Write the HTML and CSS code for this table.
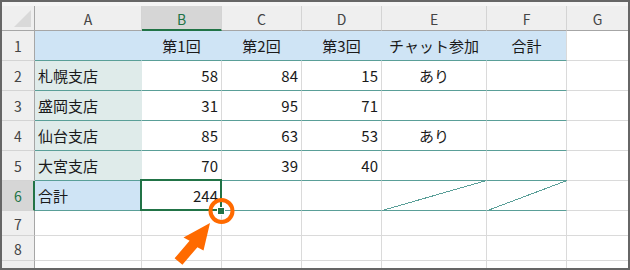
FILE: index.html
```html
<!DOCTYPE html>
<html lang="ja">
<head>
<meta charset="utf-8">
<link rel="stylesheet" href="styles.css">
</head>
<body>
<div class="frame">
  <div class="sheet">
    <div class="cell corner"><svg width="32" height="24" viewBox="0 0 32 24"><polygon points="12,21 29,21 29,4" fill="#d9d9d9"/></svg></div>
    <div class="cell ch">A</div>
    <div class="cell ch sel">B</div>
    <div class="cell ch">C</div>
    <div class="cell ch">D</div>
    <div class="cell ch">E</div>
    <div class="cell ch">F</div>
    <div class="cell ch last">G</div>

    <div class="cell rh">1</div>
    <div class="cell blue tb nr"></div>
    <div class="cell blue tb nr ctr">第1回</div>
    <div class="cell blue tb nr ctr">第2回</div>
    <div class="cell blue tb nr ctr">第3回</div>
    <div class="cell blue tb nr ctr">チャット参加</div>
    <div class="cell blue tb ctr">合計</div>
    <div class="cell last"></div>

    <div class="cell rh">2</div>
    <div class="cell lbl tb">札幌支店</div>
    <div class="cell tb num">58</div>
    <div class="cell tb num">84</div>
    <div class="cell tb num">15</div>
    <div class="cell tb ctr">あり</div>
    <div class="cell tb"></div>
    <div class="cell last"></div>

    <div class="cell rh">3</div>
    <div class="cell lbl tb">盛岡支店</div>
    <div class="cell tb num">31</div>
    <div class="cell tb num">95</div>
    <div class="cell tb num">71</div>
    <div class="cell tb ctr"></div>
    <div class="cell tb"></div>
    <div class="cell last"></div>

    <div class="cell rh">4</div>
    <div class="cell lbl tb">仙台支店</div>
    <div class="cell tb num">85</div>
    <div class="cell tb num">63</div>
    <div class="cell tb num">53</div>
    <div class="cell tb ctr">あり</div>
    <div class="cell tb"></div>
    <div class="cell last"></div>

    <div class="cell rh">5</div>
    <div class="cell lbl tb">大宮支店</div>
    <div class="cell tb num">70</div>
    <div class="cell tb num">39</div>
    <div class="cell tb num">40</div>
    <div class="cell tb ctr"></div>
    <div class="cell tb"></div>
    <div class="cell last"></div>

    <div class="cell rh sel">6</div>
    <div class="cell blue tb nr">合計</div>
    <div class="cell tb num">244</div>
    <div class="cell tb"></div>
    <div class="cell tb"></div>
    <div class="cell tb diag"><svg width="104" height="29" viewBox="0 0 104 29"><line x1="0" y1="29.5" x2="104.5" y2="-0.5" stroke="#5a9f98" stroke-width="1" shape-rendering="crispEdges"/></svg></div>
    <div class="cell tb diag"><svg width="79" height="29" viewBox="0 0 79 29"><line x1="0.5" y1="29.5" x2="80" y2="-0.5" stroke="#5a9f98" stroke-width="1" shape-rendering="crispEdges"/></svg></div>
    <div class="cell last"></div>

    <div class="cell rh">7</div>
    <div class="cell"></div><div class="cell"></div><div class="cell"></div><div class="cell"></div><div class="cell"></div><div class="cell"></div><div class="cell last"></div>

    <div class="cell rh">8</div>
    <div class="cell"></div><div class="cell"></div><div class="cell"></div><div class="cell"></div><div class="cell"></div><div class="cell"></div><div class="cell last"></div>

    <div class="cell rh">9</div>
    <div class="cell"></div><div class="cell"></div><div class="cell"></div><div class="cell"></div><div class="cell"></div><div class="cell"></div><div class="cell last"></div>
  </div>

  <svg class="overlay" width="630" height="270" viewBox="0 0 630 270">
    <rect x="141" y="180" width="80" height="30" fill="none" stroke="#217346" stroke-width="2"/>
    <rect x="217" y="207" width="8" height="8" fill="#ffffff"/>
    <rect x="218" y="208" width="6" height="6" fill="#217346"/>
    <circle cx="221.5" cy="211" r="11" fill="none" stroke="#ff6a00" stroke-width="4"/>
    <polygon points="210,223 203.5,250.5 197.4,247.2 182.4,264.7 174.6,258.3 189.6,240.8 183.5,237.5" fill="#ff6a00"/>
  </svg>
</div>
</body>
</html>
```

FILE: styles.css
```css
html, body {
  margin: 0;
  padding: 0;
  background: #ffffff;
}

.frame {
  position: relative;
  width: 630px;
  height: 270px;
  box-sizing: border-box;
  border: 2px solid #666666;
  background: #f5f5f5;
  padding-top: 4px;
  overflow: hidden;
}

.sheet {
  display: grid;
  grid-template-columns: 33px 107px 80px 80px 80px 105px 80px 61px;
  grid-template-rows: 25px repeat(6, 30px) 25px 25px 30px;
  background: #ffffff;
  font-family: "Noto Sans CJK JP", "Noto Sans", sans-serif;
  font-size: 15px;
  color: #1a1a1a;
}

.cell {
  box-sizing: border-box;
  border-right: 1px solid #dadada;
  border-bottom: 1px solid #dadada;
  display: flex;
  align-items: center;
  padding: 0 3px;
  white-space: nowrap;
  line-height: 1;
  overflow: hidden;
}

.cell.last {
  border-right: none;
}

.corner {
  background: #efefef;
  border-right: 1px solid #a6a6a6;
  border-bottom: 1px solid #a6a6a6;
  padding: 0;
  align-items: flex-start;
}

.corner svg {
  display: block;
}

.ch {
  background: #efefef;
  border-right-color: #d4d4d4;
  border-bottom: 1px solid #a6a6a6;
  justify-content: center;
  color: #444444;
  font-size: 14px;
  padding-top: 2px;
}

.ch.sel {
  background: #d6d6d6;
  color: #217346;
  border-bottom: 2px solid #217346;
  padding-top: 3px;
}

.rh {
  background: #efefef;
  border-right: 1px solid #a6a6a6;
  border-bottom-color: #d4d4d4;
  justify-content: center;
  color: #444444;
  font-size: 14px;
  padding-top: 1px;
}

.rh.sel {
  background: #d6d6d6;
  color: #217346;
  border-right: 2px solid #217346;
  padding-left: 4px;
}

.blue {
  background: #cfe4f5;
}

.blue.nr {
  border-right-color: #cfe4f5;
}

.lbl {
  background: #dfebea;
  border-right-color: #dfebea;
}

.tb {
  border-bottom-color: #5a9f98;
}

.num {
  justify-content: flex-end;
  padding-right: 3px;
}

.ctr {
  justify-content: center;
}

.diag {
  padding: 0;
  align-items: stretch;
  overflow: visible;
}

.diag svg {
  display: block;
  overflow: visible;
}

.overlay {
  position: absolute;
  left: -2px;
  top: -2px;
  pointer-events: none;
}
```
